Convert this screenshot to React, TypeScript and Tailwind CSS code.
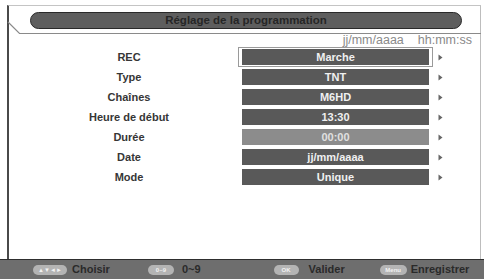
import React from "react";

const rows: { label: string; value: string; light?: boolean; selected?: boolean }[] = [
  { label: "REC", value: "Marche", selected: true },
  { label: "Type", value: "TNT" },
  { label: "Chaînes", value: "M6HD" },
  { label: "Heure de début", value: "13:30" },
  { label: "Durée", value: "00:00", light: true },
  { label: "Date", value: "jj/mm/aaaa" },
  { label: "Mode", value: "Unique" },
];

function Arrow() {
  return (
    <svg width="5" height="7" viewBox="0 0 5 7" className="ml-[5px]">
      <path d="M0.5 0.5 L4.5 3.5 L0.5 6.5 Z" fill="#666" />
    </svg>
  );
}

function Pill({ w, text }: { w: number; text: string }) {
  return (
    <div
      className="h-[10px] rounded-full bg-[#b4b4b4] flex items-center justify-center text-[6px] leading-none text-[#f2f2f2]"
      style={{ width: w }}
    >
      {text}
    </div>
  );
}

export default function App() {
  return (
    <div
      className="relative w-[484px] h-[279px] bg-white overflow-hidden flex flex-col"
      style={{ fontFamily: '"Liberation Sans", Arial, sans-serif' }}
    >
      <div className="ml-[7px] mt-[5px] w-[474px] h-[254px] border-l-2 border-t border-r border-l-[#4a4a4a] border-t-[#c4c4c4] border-r-[#bdbdbd] flex flex-col">
        {/* header */}
        <div className="h-[28px] pt-[6px] pl-[21px]">
          <div className="w-[432px] h-[17px] rounded-full border border-[#2a2a2a] bg-[#5e5e5e] flex items-center justify-center text-[11.5px] font-bold text-[#262626] leading-none">
            Réglage de la programmation
          </div>
        </div>
        {/* date line */}
        <div className="h-[13px] flex items-center justify-end pr-[8px] text-[12.5px] leading-none text-[#8a8a8a] gap-[14px]">
          <span>jj/mm/aaaa</span>
          <span>hh:mm:ss</span>
        </div>
        {/* rows */}
        <div className="flex flex-col">
          {rows.map((r) => (
            <div key={r.label} className="h-[20px] flex items-center">
              <div className="ml-[11px] w-[218px] text-center text-[11px] font-bold text-[#363636] leading-none">
                {r.label}
              </div>
              <div
                className={`w-[195px] h-[20px] px-[3px] py-[1px] border ${
                  r.selected ? "border-[#9a9a9a]" : "border-transparent"
                }`}
              >
                <div
                  className={`h-full flex items-center justify-center text-[11px] font-bold leading-none ${
                    r.light ? "bg-[#8c8c8c] text-[#e0e0e0]" : "bg-[#595959] text-[#f0f0f0]"
                  }`}
                >
                  {r.value}
                </div>
              </div>
              <Arrow />
            </div>
          ))}
        </div>
      </div>
      {/* footer */}
      <div className="h-[20px] bg-[#6e6e6e] border-t border-[#2e2e2e] flex items-center pl-[33px] text-[11px] font-bold text-[#2a2a2a] leading-none">
        <Pill w={34} text="▲▼◄►" />
        <span className="ml-[5px]">Choisir</span>
        <div className="ml-[38px]">
          <Pill w={26} text="0~9" />
        </div>
        <span className="ml-[8px]">0~9</span>
        <div className="ml-[73px]">
          <Pill w={25} text="OK" />
        </div>
        <span className="ml-[10px]">Valider</span>
        <div className="ml-[35px]">
          <Pill w={27} text="Menu" />
        </div>
        <span className="ml-[4px]">Enregistrer</span>
      </div>
      {/* header decorative lines */}
      <svg className="absolute left-0 top-0" width="484" height="40" viewBox="0 0 484 40">
        <path d="M8 22 L19.5 33.5 L481 33.5" fill="none" stroke="#8a8a8a" strokeWidth="1.2" />
      </svg>
    </div>
  );
}
